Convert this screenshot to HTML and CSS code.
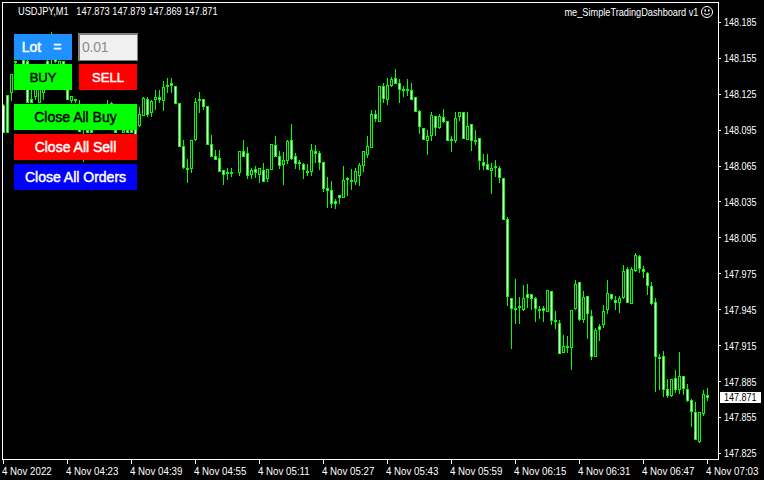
FILE: index.html
```html
<!DOCTYPE html>
<html lang="en">
<head>
<meta charset="utf-8">
<title>USDJPY,M1</title>
<link rel="stylesheet" href="styles.css">
</head>
<body>
<div class="terminal">
  <div class="upper">
    <div class="chart">
      <svg id="candles" class="candles" width="715" height="456" viewBox="3 3 715 456"></svg>
      <div class="symbol">USDJPY,M1&nbsp;&nbsp;<span class="ohlc">147.873 147.879 147.869 147.871</span></div>
      <div class="expert">
        <span class="expert-name">me_SimpleTradingDashboard v1</span>
        <svg class="smiley" width="12" height="12" viewBox="0 0 12 12">
          <circle cx="6" cy="6" r="5.5" fill="none" stroke="#fff"/>
          <rect x="3.5" y="3.5" width="1.5" height="2" fill="#fff"/>
          <rect x="7" y="3.5" width="1.5" height="2" fill="#fff"/>
          <path d="M3 7.5 Q6 10.3 9 7.5" fill="none" stroke="#fff"/>
        </svg>
      </div>
      <div class="panel">
        <div class="row row-top">
          <div class="btn lot"><span>Lot</span><span>=</span></div>
          <div class="lot-input">0.01</div>
        </div>
        <div class="row row-trade">
          <div class="btn buy">BUY</div>
          <div class="btn sell">SELL</div>
        </div>
        <div class="btn wide close-buy">Close All Buy</div>
        <div class="btn wide close-sell">Close All Sell</div>
        <div class="btn wide close-orders">Close All Orders</div>
      </div>
    </div>
    <div class="price-axis">
      <div class="price"><span>148.185</span></div>
      <div class="price"><span>148.155</span></div>
      <div class="price"><span>148.125</span></div>
      <div class="price"><span>148.095</span></div>
      <div class="price"><span>148.065</span></div>
      <div class="price"><span>148.035</span></div>
      <div class="price"><span>148.005</span></div>
      <div class="price"><span>147.975</span></div>
      <div class="price"><span>147.945</span></div>
      <div class="price"><span>147.915</span></div>
      <div class="price"><span>147.885</span></div>
      <div class="price"><span>147.855</span></div>
      <div class="price"><span>147.825</span></div>
      <div class="price-tag"><span>147.871</span></div>
    </div>
  </div>
  <div class="time-axis">
    <div class="time"><span>4 Nov 2022</span></div>
    <div class="time"><span>4 Nov 04:23</span></div>
    <div class="time"><span>4 Nov 04:39</span></div>
    <div class="time"><span>4 Nov 04:55</span></div>
    <div class="time"><span>4 Nov 05:11</span></div>
    <div class="time"><span>4 Nov 05:27</span></div>
    <div class="time"><span>4 Nov 05:43</span></div>
    <div class="time"><span>4 Nov 05:59</span></div>
    <div class="time"><span>4 Nov 06:15</span></div>
    <div class="time"><span>4 Nov 06:31</span></div>
    <div class="time"><span>4 Nov 06:47</span></div>
    <div class="time"><span>4 Nov 07:03</span></div>
  </div>
</div>
<script src="chart.js"></script>
</body>
</html>
```
FILE: styles.css
```css
* { box-sizing: border-box; }
html, body { margin: 0; height: 100%; background: #000; overflow: hidden; }
body { font-family: "Liberation Sans", Arial, sans-serif; color: #fff; font-size: 11px; }
.terminal { width: 764px; height: 480px; padding: 2px 0 0 2px; display: flex; flex-direction: column; }
.upper { display: flex; height: 458px; }
.chart { position: relative; width: 717px; height: 458px; border: 1px solid #fff; }
.candles { display: block; }
.symbol { position: absolute; left: 15px; top: 1px; line-height: 14px; white-space: nowrap; transform: scaleX(.84); transform-origin: left center; }
.ohlc { margin-left: 3px; }
.expert { position: absolute; right: 5px; top: 2px; display: flex; align-items: center; gap: 3px; line-height: 14px; white-space: nowrap; }
.expert-name { transform: scaleX(.835); transform-origin: right center; }
.smiley { display: block; }
.panel { position: absolute; left: 11px; top: 30px; width: 124px; display: flex; flex-direction: column; }
.row { display: flex; justify-content: space-between; }
.row-top { height: 28px; align-items: center; margin-bottom: 3px; }
.row-trade { margin-bottom: 14px; margin-right: 1px; }
.btn { height: 26px; display: flex; align-items: center; justify-content: center; font-size: 13px; -webkit-text-stroke: .45px; }
.lot { width: 58px; background: #1e90ff; font-size: 14px; gap: 12px; padding-right: 3px; }
.lot-input { width: 60px; height: 28px; background: #f0f0f0; border: 1px solid #808080; box-shadow: inset 1px 1px 0 #808080; color: #8c8c8c; font-size: 14px; line-height: 26px; padding-left: 3px; letter-spacing: -.2px; }
.buy { width: 58px; background: #0f0; color: #000; }
.sell { width: 58px; background: #f00; }
.wide { width: 123px; font-size: 14px; margin-bottom: 4px; }
.close-buy { background: #0f0; color: #000; }
.close-sell { background: #f00; }
.close-orders { background: #00f; }
.price-axis { position: relative; width: 45px; padding-top: 2.5px; }
.price { height: 35.92px; display: flex; align-items: center; gap: 3px; }
.price::before { content: ""; width: 4px; height: 1px; background: #fff; }
.price span, .price-tag span { display: block; transform: scaleX(.817); transform-origin: left center; }
.price-tag { position: absolute; left: 1px; top: 390px; width: 41px; height: 11px; padding-left: 4px; background: #fff; color: #000; line-height: 11px; }
.time-axis { display: flex; }
.time { width: 64px; flex: none; white-space: nowrap; }
.time::before { content: ""; display: block; width: 1px; height: 4px; margin-left: 1px; background: #fff; }
.time span { display: block; line-height: 13px; margin-top: 1px; transform: scaleX(.883); transform-origin: left center; }
.time:last-child { width: 58px; }
```
FILE: chart.js
```js
// Candles as [high, low, bodyTop, bodyBottom, fill]; y values are in 1/3 px from the segment origin.
var W = "#fff", K = "#000";
var segments = [
  { x: 3, y: 0, rows: [
    [312,400,315,400,W],[285,400,285,400,W],[222,303,222,280,K],[183,240,183,190,K],[200,260,210,240,K],
    [170,200,180,195,W],[180,309,183,309,W],[250,309,298,309,W],[230,300,240,290,K],[240,309,240,309,K],
    [240,300,250,280,K],[150,250,183,200,W],[96,200,120,170,K],[170,190,172,186,W],[183,230,183,210,K],
    [183,230,183,210,W],[230,300,240,300,W],[288,310,288,303,K],[297,310,297,303,K],[300,396,320,396,W],
    [330,486,340,380,W],[350,398,390,398,W],[350,398,390,398,W],[320,370,330,360,K],[320,370,330,360,W],
    [320,370,330,350,K],[300,350,320,345,K],[306,350,310,340,K],[340,398,390,398,W],[340,380,350,370,K],
    [340,398,390,398,K],[340,398,390,398,W],[340,398,390,398,W],[366,437,366,418,W],
    [320,380,343,379,K],[292,349,295,349,K],[292,352,298,346,W],[300,352,304,340,K],[270,330,291,300,K],
    [270,310,291,300,W],[244,332,262,302,K],[235,280,256,259,W],[235,280,250,259,W],[259,313,259,313,W],
    [310,440,310,440,W],[420,507,439,505,W],[478,550,505,511,W],[420,520,420,508,K],[295,424,307,421,K],
    [277,340,298,301,K],[298,330,298,320,W],[319,435,319,435,W],[405,472,433,472,W],[450,480,468,480,W],
    [450,516,475,516,W],[510,555,511,526,W],[505,540,517,520,W],[505,530,517,520,W]
  ]},
  { x: 239, y: 60, rows: [
    [273,347,273,340,K],[240,292,273,291,W],[262,357,280,347,W],[325,357,331,345,K],[319,354,328,338,W],
    [325,369,325,345,K],[309,366,331,365,W],[328,366,328,357,K],[252,329,252,329,K],[228,291,255,290,W],
    [273,327,288,318,W],[276,375,300,315,K],[240,312,243,303,K],[192,300,240,297,W],[279,327,288,312,W],
    [300,330,306,312,W],[310,357,312,330,W],[312,348,333,339,W],[252,348,270,336,K],[255,309,273,282,W],
    [273,330,279,309,W],[306,396,306,387,W],[351,444,384,393,W],[363,444,390,432,W],[417,447,423,432,W],
    [405,432,405,414,W],[318,414,360,414,K],[351,408,354,357,W],[327,390,360,363,W],[324,375,333,366,K],
    [309,378,315,348,K],[273,336,273,318,K],[228,294,258,285,K],[150,264,162,264,K],[150,186,162,177,W],
    [78,186,78,186,K],[69,129,78,117,W],[54,135,75,120,K],[51,81,57,78,K],[27,72,54,72,W],
    [57,129,69,90,W],[78,111,87,93,W],[57,108,87,93,W],[69,120,90,120,W],[111,156,111,156,W],
    [150,222,153,201,W],[204,240,204,240,W],[210,285,228,243,K],[156,243,165,228,K],[168,228,168,204,W],
    [162,207,168,204,K],[147,189,171,186,W],[183,243,183,243,W],[228,276,237,240,W],[156,249,174,243,K],
    [156,183,156,171,K],[156,237,156,237,W],[156,240,198,240,K],[192,273,192,243,W],[210,255,240,243,W],
    [234,330,234,303,W],[282,330,306,318,W],[282,330,312,330,W],[309,402,324,333,K],[300,351,318,321,W],
    [318,369,324,354,W]
  ]},
  { x: 503, y: 180, rows: [
    [-6,120,-6,120,W],[112,378,118,352,W],[355,506,355,388,W],[297,432,385,388,W],[352,432,379,385,W],
    [315,393,355,391,K],[312,384,343,355,W],[343,390,343,358,W],[352,426,355,388,W],[378,417,387,390,W],
    [378,426,385,394,W],[331,397,331,397,K],[334,435,334,423,W],[393,447,421,427,W],[420,522,430,522,W],
    [465,520,499,520,K],[468,519,499,502,W],[390,570,391,505,K],[300,390,313,388,K],[307,423,307,421,W],
    [333,430,352,421,K],[349,478,349,403,W],[390,540,409,532,W],[445,532,451,532,K],[433,484,439,450,W],
    [375,445,394,435,K],[300,403,340,391,K],[343,360,343,358,W],[349,390,361,370,W],[349,399,355,370,K],
    [255,357,274,355,K],[262,370,268,370,W],[262,373,268,372,K],[220,276,226,274,K],[226,278,229,268,W],
    [259,294,268,277,W],[277,345,280,319,W],[307,376,319,373,W],[355,636,367,531,W]
  ]},
  { x: 659, y: 340, rows: [
    [42,150,50,53,W],[33,171,48,150,W],[117,174,147,168,W],[117,171,117,168,K],[90,159,114,150,W],
    [36,162,108,150,K],[108,165,108,147,W],[132,186,147,183,W],[177,261,180,216,W],[186,300,216,300,W],
    [216,309,216,306,K],[150,228,162,222,K],[144,183,165,174,W]
  ]}
];

var NS = "http://www.w3.org/2000/svg";
var svg = document.getElementById("candles");

function shape(name, attrs) {
  var el = document.createElementNS(NS, name);
  for (var k in attrs) el.setAttribute(k, attrs[k]);
  svg.appendChild(el);
}

segments.forEach(function (seg) {
  seg.rows.forEach(function (c, i) {
    var x = seg.x + i * 4;
    var py = function (v) { return seg.y + Math.round(v / 3); };
    var top = py(c[2]), bottom = Math.max(py(c[3]), top + 1);
    shape("path", { d: "M" + (x + 0.5) + " " + py(c[0]) + "V" + py(c[1]), stroke: "#0f0", fill: "none" });
    shape("rect", { x: x - 0.5, y: top + 0.5, width: 2, height: bottom - top - 1 > 0 ? bottom - top - 1 : 1, fill: c[4], stroke: "#0f0" });
  });
});
```
